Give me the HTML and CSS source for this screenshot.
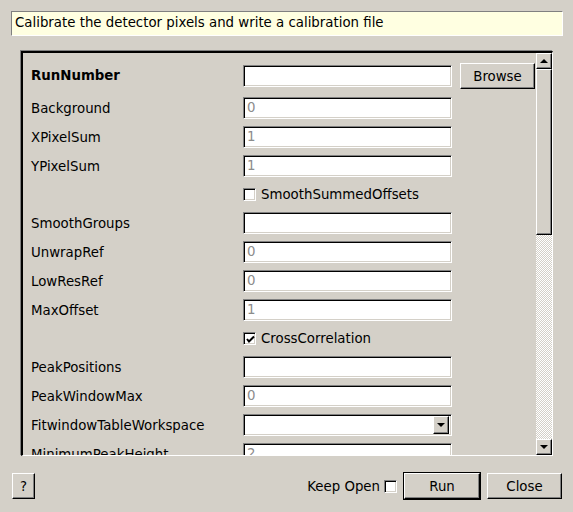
FILE: index.html
```html
<!DOCTYPE html>
<html>
<head>
<meta charset="utf-8">
<link rel="stylesheet" href="styles.css">
</head>
<body>
<div class="dialog">
  <div class="desc">Calibrate the detector pixels and write a calibration file</div>
  <div class="frame">
    <div class="viewport">
      <div class="form">
        <div class="row first">
          <div class="label bold">RunNumber</div>
          <div class="field top"></div>
          <div class="btn browse">Browse</div>
        </div>
        <div class="row"><div class="label">Background</div><div class="field"><span class="ph">0</span></div></div>
        <div class="row"><div class="label">XPixelSum</div><div class="field"><span class="ph">1</span></div></div>
        <div class="row"><div class="label">YPixelSum</div><div class="field"><span class="ph">1</span></div></div>
        <div class="row check"><span class="box"></span><span class="ctext">SmoothSummedOffsets</span></div>
        <div class="row"><div class="label">SmoothGroups</div><div class="field"></div></div>
        <div class="row"><div class="label">UnwrapRef</div><div class="field"><span class="ph">0</span></div></div>
        <div class="row"><div class="label">LowResRef</div><div class="field"><span class="ph">0</span></div></div>
        <div class="row"><div class="label">MaxOffset</div><div class="field"><span class="ph">1</span></div></div>
        <div class="row check"><span class="box"><svg width="9" height="9" viewBox="0 0 9 9"><polyline points="1,4 3,6.5 8,1.5" fill="none" stroke="#000" stroke-width="2"/></svg></span><span class="ctext">CrossCorrelation</span></div>
        <div class="row"><div class="label">PeakPositions</div><div class="field"></div></div>
        <div class="row"><div class="label">PeakWindowMax</div><div class="field"><span class="ph">0</span></div></div>
        <div class="row"><div class="label">FitwindowTableWorkspace</div><div class="field combo"><span class="cbtn"><span class="tri-down"></span></span></div></div>
        <div class="row"><div class="label">MinimumPeakHeight</div><div class="field"><span class="ph">2</span></div></div>
      </div>
      <div class="scrollbar">
        <div class="sbtn"><span class="tri-up"></span></div>
        <div class="slider"></div>
        <div class="groove"></div>
        <div class="sbtn"><span class="tri-down"></span></div>
      </div>
    </div>
  </div>
  <div class="bottom">
    <div class="btn help">?</div>
    <div class="right">
      <span class="keep">Keep Open</span>
      <span class="box keepbox"></span>
      <div class="default"><div class="btn run">Run</div></div>
      <div class="btn close">Close</div>
    </div>
  </div>
</div>
</body>
</html>
```
FILE: styles.css
```css
html, body {
  margin: 0;
  padding: 0;
  background: #d4d0c8;
  width: 573px;
  height: 512px;
  overflow: hidden;
  font-family: "DejaVu Sans", sans-serif;
  font-size: 13.33px;
  color: #000;
}
.dialog {
  padding: 11px 0 0 11px;
}
.desc {
  box-sizing: border-box;
  width: 552px;
  height: 25px;
  background: #ffffe1;
  border: 1px solid;
  border-color: #808080 #fff #fff #808080;
  padding-left: 3px;
  line-height: 22px;
}
.frame {
  box-sizing: border-box;
  margin: 15px 0 0 10px;
  width: 532px;
  height: 405px;
  border-style: solid;
  border-width: 2px 1px 1px 2px;
  border-color: #000 #fff #fff #000;
  box-shadow: -1px -1px 0 #808080;
}
.viewport {
  display: flex;
  height: 402px;
  overflow: hidden;
}
.form {
  width: 513px;
  box-sizing: border-box;
  padding: 10px 0 0 8px;
  display: flex;
  flex-direction: column;
  gap: 7px;
  overflow: hidden;
}
.row {
  display: flex;
  align-items: center;
  height: 22px;
  flex: none;
}
.row.first {
  height: 27px;
  align-items: flex-start;
}
.row.first .label { line-height: 26px; }
.field.top { margin-top: 2px; }
.label {
  width: 212px;
  flex: none;
  white-space: nowrap;
}
.bold { font-weight: bold; }
.field {
  box-sizing: border-box;
  width: 209px;
  height: 22px;
  flex: none;
  background: #fff;
  border: 1px solid;
  border-color: #808080 #fff #fff #808080;
  box-shadow: inset 1px 1px 0 #000, inset -1px -1px 0 #d4d0c8;
  padding-left: 3px;
  line-height: 20px;
  display: flex;
  align-items: center;
}
.ph { color: #8c8c8c; }
.combo { justify-content: flex-end; padding: 1px 2px 1px 0; }
.cbtn {
  box-sizing: border-box;
  width: 16px;
  height: 18px;
  background: #d4d0c8;
  border: 1px solid;
  border-color: #fff #000 #000 #fff;
  box-shadow: inset -1px -1px 0 #808080;
  display: flex;
  align-items: center;
  justify-content: center;
}
.btn {
  box-sizing: border-box;
  background: #d4d0c8;
  border: 1px solid;
  border-color: #fff #000 #000 #fff;
  box-shadow: inset -1px -1px 0 #808080;
  display: flex;
  align-items: center;
  justify-content: center;
}
.browse {
  width: 75px;
  height: 26px;
  margin-left: 8px;
}
.row.check {
  height: 21px;
  padding-left: 212px;
}
.box {
  box-sizing: border-box;
  width: 13px;
  height: 13px;
  flex: none;
  background: #fff;
  border: 1px solid;
  border-color: #808080 #fff #fff #808080;
  box-shadow: inset 1px 1px 0 #000, inset -1px -1px 0 #d4d0c8;
  display: flex;
  align-items: center;
  justify-content: center;
  padding: 1px 0 0 1px;
}
.ctext { margin-left: 5px; }
.scrollbar {
  width: 16px;
  flex: none;
  display: flex;
  flex-direction: column;
}
.sbtn {
  box-sizing: border-box;
  height: 16px;
  background: #d4d0c8;
  border: 1px solid;
  border-color: #fff #000 #000 #fff;
  box-shadow: inset -1px -1px 0 #808080;
  display: flex;
  align-items: center;
  justify-content: center;
}
.slider {
  box-sizing: border-box;
  height: 166px;
  background: #d4d0c8;
  border: 1px solid;
  border-color: #fff #000 #000 #fff;
  box-shadow: inset -1px -1px 0 #808080;
}
.groove {
  flex: 1;
  background: repeating-conic-gradient(#ffffff 0 25%, #d4d0c8 0 50%) 0 0 / 2px 2px;
}
.tri-up {
  width: 0; height: 0;
  border-left: 4px solid transparent;
  border-right: 4px solid transparent;
  border-bottom: 4px solid #000;
}
.tri-down {
  width: 0; height: 0;
  border-left: 4px solid transparent;
  border-right: 4px solid transparent;
  border-top: 4px solid #000;
}
.bottom {
  display: flex;
  align-items: center;
  margin-top: 16px;
  height: 28px;
  width: 550px;
  padding-left: 1px;
}
.help {
  width: 23px;
  height: 26px;
}
.right {
  margin-left: auto;
  display: flex;
  align-items: center;
}
.keepbox { margin-left: 4px; }
.default {
  margin-left: 6px;
  border: 1px solid #000;
}
.run {
  width: 76px;
  height: 26px;
}
.close {
  margin-left: 6px;
  width: 75px;
  height: 26px;
}
```
